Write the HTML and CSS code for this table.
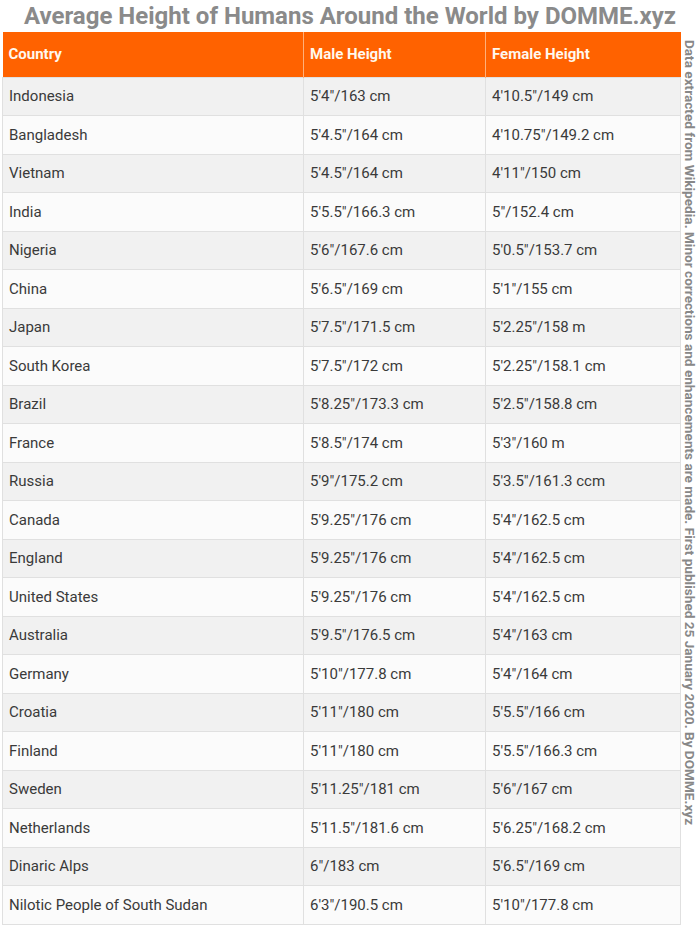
FILE: index.html
```html
<!DOCTYPE html>
<html>
<head>
<meta charset="utf-8">
<link rel="stylesheet" href="styles.css">
</head>
<body>
<h1 class="title">Average Height of Humans Around the World by DOMME.xyz</h1>
<div class="main">
<table class="heights">
<thead>
<tr><th class="c1">Country</th><th class="c2">Male Height</th><th class="c3">Female Height</th></tr>
</thead>
<tbody>
<tr><td>Indonesia</td><td>5'4"/163 cm</td><td>4'10.5"/149 cm</td></tr>
<tr><td>Bangladesh</td><td>5'4.5"/164 cm</td><td>4'10.75"/149.2 cm</td></tr>
<tr><td>Vietnam</td><td>5'4.5"/164 cm</td><td>4'11"/150 cm</td></tr>
<tr><td>India</td><td>5'5.5"/166.3 cm</td><td>5"/152.4 cm</td></tr>
<tr><td>Nigeria</td><td>5'6"/167.6 cm</td><td>5'0.5"/153.7 cm</td></tr>
<tr><td>China</td><td>5'6.5"/169 cm</td><td>5'1"/155 cm</td></tr>
<tr><td>Japan</td><td>5'7.5"/171.5 cm</td><td>5'2.25"/158 m</td></tr>
<tr><td>South Korea</td><td>5'7.5"/172 cm</td><td>5'2.25"/158.1 cm</td></tr>
<tr><td>Brazil</td><td>5'8.25"/173.3 cm</td><td>5'2.5"/158.8 cm</td></tr>
<tr><td>France</td><td>5'8.5"/174 cm</td><td>5'3"/160 m</td></tr>
<tr><td>Russia</td><td>5'9"/175.2 cm</td><td>5'3.5"/161.3 ccm</td></tr>
<tr><td>Canada</td><td>5'9.25"/176 cm</td><td>5'4"/162.5 cm</td></tr>
<tr><td>England</td><td>5'9.25"/176 cm</td><td>5'4"/162.5 cm</td></tr>
<tr><td>United States</td><td>5'9.25"/176 cm</td><td>5'4"/162.5 cm</td></tr>
<tr><td>Australia</td><td>5'9.5"/176.5 cm</td><td>5'4"/163 cm</td></tr>
<tr><td>Germany</td><td>5'10"/177.8 cm</td><td>5'4"/164 cm</td></tr>
<tr><td>Croatia</td><td>5'11"/180 cm</td><td>5'5.5"/166 cm</td></tr>
<tr><td>Finland</td><td>5'11"/180 cm</td><td>5'5.5"/166.3 cm</td></tr>
<tr><td>Sweden</td><td>5'11.25"/181 cm</td><td>5'6"/167 cm</td></tr>
<tr><td>Netherlands</td><td>5'11.5"/181.6 cm</td><td>5'6.25"/168.2 cm</td></tr>
<tr><td>Dinaric Alps</td><td>6"/183 cm</td><td>5'6.5"/169 cm</td></tr>
<tr><td>Nilotic People of South Sudan</td><td>6'3"/190.5 cm</td><td>5'10"/177.8 cm</td></tr>
</tbody>
</table>
<div class="note">Data extracted from Wikipedia. Minor corrections and enhancements are made. First published 25 January 2020. By DOMME.xyz</div>
</div>
</body>
</html>
```
FILE: styles.css
```css
html, body {
  margin: 0;
  padding: 0;
  background: #ffffff;
}
body {
  font-family: Roboto, "Liberation Sans", sans-serif;
  width: 700px;
  height: 927px;
  overflow: hidden;
}
.title {
  margin: 0;
  height: 32px;
  line-height: 33px;
  font-size: 24px;
  font-weight: 700;
  color: #8a8a8a;
  text-align: center;
  white-space: nowrap;
  padding-left: 0;
}
.main {
  display: flex;
  align-items: stretch;
}
.heights {
  width: 678px;
  margin-left: 2px;
  border-collapse: collapse;
  table-layout: fixed;
}
.heights th {
  background: #ff6200;
  color: #fff8ee;
  font-weight: 700;
  font-size: 15px;
  text-align: left;
  height: 45px;
  padding: 0 6px;
  border-right: 1px solid #ffb07a;
  box-sizing: border-box;
}
.heights th:last-child {
  border-right: none;
}
.c1 { width: 301px; }
.c2 { width: 182px; }
.c3 { width: 195px; }
.heights td {
  height: 38.5px;
  padding: 0 6px;
  font-size: 15px;
  color: #3a3a3a;
  border: 1px solid #e0e0e0;
  box-sizing: border-box;
  white-space: nowrap;
}
.heights tbody tr:nth-child(odd) td {
  background: #f1f1f1;
}
.heights tbody tr:nth-child(even) td {
  background: #fbfbfb;
}
.note {
  writing-mode: vertical-rl;
  font-size: 13.6px;
  font-weight: 700;
  color: #888888;
  white-space: nowrap;
  width: 18px;
  padding-top: 8px;
  box-sizing: border-box;
  line-height: 18px;
}
```
